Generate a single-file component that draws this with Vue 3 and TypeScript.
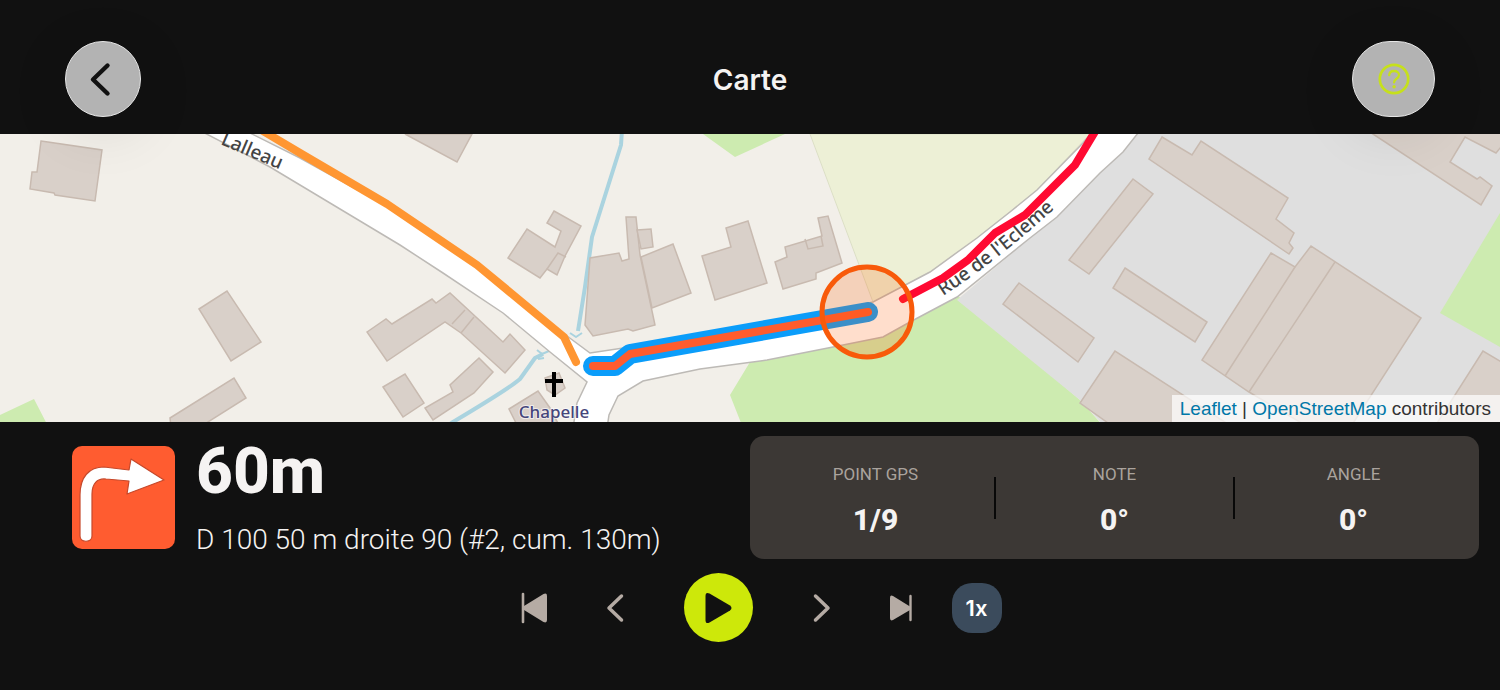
<script setup lang="ts">
import { ref } from 'vue'

interface Stat {
  label: string
  value: string
}

const stats: Stat[] = [
  { label: 'POINT GPS', value: '1/9' },
  { label: 'NOTE', value: '0°' },
  { label: 'ANGLE', value: '0°' },
]

const speeds = [1, 2, 4]
const speedIndex = ref(0)

function nextSpeed(): void {
  speedIndex.value = (speedIndex.value + 1) % speeds.length
}

const buildings: string[] = [
  '41,141 102,150 95,201 55,195 54,193 30,189 32,172 37,172',
  '405,134 457,162 472,134',
  '554,211 581,226 565,256 557,275 547,269 540,278 508,258 527,229 555,247 561,231 547,223',
  '626,217 636,217 640,255 655,325 633,331 628,329 593,336 585,325 590,258 619,253 622,261 629,259',
  '637,230 651,229 653,247 641,249',
  '641,257 673,244 691,293 652,308',
  '702,256 731,247 726,228 748,221 767,283 715,300',
  '818,218 828,216 842,263 816,273 816,279 783,289 775,262 787,257 785,247 822,236',
  '199,309 227,291 261,342 231,361',
  '170,418 234,378 246,398 200,427 171,427',
  '367,332 386,319 392,324 432,299 436,303 450,293 503,342 510,334 525,350 505,373 461,333 445,322 387,361',
  '383,387 405,374 424,403 403,417',
  '479,358 493,372 474,393 433,420 425,408 453,392 450,385',
  '509,409 538,391 550,408 560,427 518,427',
  '545,378 559,373 565,388 555,395 547,390',
  '1162,137 1192,155 1201,141 1288,198 1276,219 1294,233 1289,243 1293,248 1289,254 1149,159',
  '1133,179 1153,194 1089,274 1069,260',
  '1125,268 1207,322 1195,342 1113,288',
  '1019,283 1094,338 1078,362 1003,304',
  '1115,351 1080,403 1115,428 1234,428',
  '1271,253 1295,267 1311,246 1421,318 1350,428 1310,428 1249,392 1202,360',
  '1373,134 1481,205 1492,186 1480,177 1477,179 1450,162 1465,137 1496,153 1505,142 1505,128 1363,128',
  '1483,351 1434,428 1505,428 1505,364',
]
</script>

<template>
  <main class="screen">
    <header class="topbar">
      <button class="round back" type="button" aria-label="Retour">
        <svg width="38" height="38" viewBox="0 0 38 38" fill="none" stroke="#111" stroke-width="4.4" stroke-linecap="round" stroke-linejoin="round">
          <path d="M23.500 5.500 L9 19.500 L23.500 33.500" />
        </svg>
      </button>
      <h1>Carte</h1>
      <button class="round help" type="button" aria-label="Aide">
        <svg width="32" height="32" viewBox="0 0 32 32" fill="none" stroke="#c6e01c" stroke-linecap="round" stroke-linejoin="round">
          <circle cx="16" cy="16" r="14.200" stroke-width="2.700" />
          <path d="M11.200 12.200 C11.400 9.400 13.200 8 16.100 8 C19 8 21 9.700 21 12 C21 14 19.800 15 18.200 16 C16.700 17 16.100 17.700 16.100 19.400" stroke-width="2.300" />
          <circle cx="16.100" cy="23.700" r="1.700" fill="#c6e01c" stroke="none" />
        </svg>
      </button>
    </header>

    <section class="map" aria-label="Carte du parcours">
      <svg class="tiles" viewBox="0 134 1500 288" preserveAspectRatio="xMidYMid slice">
        <defs>
          <path id="rue" d="M943 296 Q1005 256 1068 196" />
        </defs>
        <rect y="100" width="1500" height="360" fill="#f2efe9" />
        <path d="M810 134 L873 302 L930 272 L977 238 L1037 190 L1090 134 Z" fill="#edf0d6" stroke="#dcdfc6" />
        <path d="M703 134 L735 157 L785 134 Z M0 415 L34 399 L49 428 H0 Z" fill="#cdebb0" />
        <path d="M750 362 L730 395 L743 428 H1105 L1080 400 L957 295 L883 335 Z" fill="#cdebb0" />
        <path d="M1137 134 L1030 238 L957 300 L1080 400 L1106 428 H1500 V134 Z" fill="#dfdfdf" />
        <path d="M1500 213 L1440 313 L1500 347 Z" fill="#cdebb0" />

        <g fill="none" stroke="#aad3df" stroke-width="4" stroke-linejoin="round">
          <path d="M622 130 L621 145 L592 237 L585 287 L578 331" />
          <path d="M543 354 L535 358 L520 379 Q510 388 453 422 L444 428" />
          <path d="M570 333 L576 337 L582 333 M537 350 L542 354 L549 351 M538 359 L544 358" stroke-width="2" />
        </g>

        <path
          class="road"
          d="M195 128 L270 167 L400 245 L443 273 L503 313 L550 352 L587 382 L577 403 L573 428 H607 L609 415 L618 396 L643 381 L700 369 L767 360 L833 347 L883 337 L910 322 L957 297 L1030 238 L1057 217 L1100 173 L1123 152 L1142 128 H1096 L1083 143 L1037 190 L1010 212 L977 238 L930 272 L873 302 L740 332 L630 347 L590 353 L563 333 L475 265 L385 205 L300 158 L240 128 Z"
        />

        <g class="buildings">
          <polygon v-for="shape in buildings" :key="shape" :points="shape" />
          <path d="M547 269 L558 253 L566 257 M805 239 L808 249 L823 246 L821 236 M452 324 L465 310 M461 333 L474 317 M1295 267 L1225 376 M1335 262 L1249 392" fill="none" />
        </g>

        <g class="streets">
          <text transform="translate(220 144) rotate(23)">Lalleau</text>
          <text><textPath href="#rue">Rue de l'Ecleme</textPath></text>
        </g>

        <path d="M554 372 V397 M545 381 H563" stroke="#000" stroke-width="4" />
        <text class="place" x="554" y="418" text-anchor="middle">Chapelle</text>

        <g fill="none" stroke-linecap="round" stroke-linejoin="round">
          <path d="M258 128 L300 153 L387 204 L477 265 L564 337 L576 362" stroke="#ff9632" stroke-width="8" />
          <path d="M903 299 L943 278 L968 260 L995 233 L1025 215 L1075 165 L1096 130" stroke="#ff0a32" stroke-width="8" />
          <path d="M593 366 H615 L630 354 L868 312" stroke="#0b9dfa" stroke-width="20" />
          <path d="M593 366 H615 L630 354 L868 312" stroke="#ff5c2e" stroke-width="8" />
        </g>
        <circle cx="867" cy="312" r="45" fill="#ff5a00" fill-opacity="0.200" stroke="#f85a0a" stroke-width="5" />
      </svg>
      <div class="attribution">
        <a href="#leaflet">Leaflet</a> | <a href="#osm">OpenStreetMap</a> contributors
      </div>
    </section>

    <section class="panel">
      <div class="info">
        <div class="instruction">
          <svg class="turn" width="103" height="103" viewBox="0 0 103 103">
            <rect width="103" height="103" rx="10" fill="#ff5c30" />
            <path
              d="M8 49 C8 31 17 21 32 21 L57 24 L59 13 L92 34 L55 48 L57 35 L34 33 C25 32 20 38 20 48 V90 C20 97 8 97 8 90 Z"
              fill="#fff" stroke="#c6482a" stroke-width="1.200" stroke-linejoin="round"
            />
          </svg>
          <div class="words">
            <strong class="distance">60m</strong>
            <p class="detail">D 100 50 m droite 90 (#2, cum. 130m)</p>
          </div>
        </div>

        <dl class="stats">
          <div v-for="stat in stats" :key="stat.label" class="stat">
            <dt>{{ stat.label }}</dt>
            <dd>{{ stat.value }}</dd>
          </div>
        </dl>
      </div>

      <nav class="controls" aria-label="Lecture">
        <button class="skip" type="button" aria-label="Premier point">
          <svg width="28" height="32" viewBox="0 0 28 32" fill="#b5aba4">
            <path d="M2 2 V30" stroke="#b5aba4" stroke-width="2.600" stroke-linecap="round" />
            <path d="M3 14 L22.500 2 Q26 .5 26 4 V28 Q26 31.500 22.500 30 L3 18 Z" />
          </svg>
        </button>
        <button class="step" type="button" aria-label="Point précédent">
          <svg width="20" height="32" viewBox="0 0 20 32" fill="none" stroke="#b5aba4" stroke-width="3.500" stroke-linecap="round" stroke-linejoin="round">
            <path d="M16.500 4 L4 16 L16.500 28" />
          </svg>
        </button>
        <button class="play" type="button" aria-label="Lecture">
          <svg width="28" height="32" viewBox="0 0 28 32" fill="#111">
            <path d="M1.500 4 Q1.500 -.5 5.500 1.500 L26 13.500 Q29 16 26 18.500 L5.500 30.500 Q1.500 32.500 1.500 28 Z" />
          </svg>
        </button>
        <button class="step" type="button" aria-label="Point suivant">
          <svg width="20" height="32" viewBox="0 0 20 32" fill="none" stroke="#b5aba4" stroke-width="3.500" stroke-linecap="round" stroke-linejoin="round">
            <path d="M3.500 4 L16 16 L3.500 28" />
          </svg>
        </button>
        <button class="skip" type="button" aria-label="Dernier point">
          <svg width="24" height="28" viewBox="0 0 24 28" fill="#b5aba4">
            <path d="M20.500 2 V26" stroke="#b5aba4" stroke-width="2.400" stroke-linecap="round" />
            <path d="M20 12.500 L3 2 Q0 .5 0 4 V24 Q0 27.500 3 26 L20 16 Z" />
          </svg>
        </button>
        <button class="speed" type="button" @click="nextSpeed">{{ speeds[speedIndex] }}x</button>
      </nav>
    </section>
  </main>
</template>

<style>
body {
  margin: 0;
  background: #111;
}
</style>

<style scoped>
.screen {
  display: flex;
  flex-direction: column;
  min-height: 100vh;
  background: #111;
  color: #f5f3f2;
  font-family: Roboto, "Noto Sans", sans-serif;
}

button {
  display: flex;
  align-items: center;
  justify-content: center;
  padding: 0;
  border: 0;
  background: none;
  font: inherit;
  cursor: pointer;
}

.topbar {
  position: relative;
  z-index: 1;
  display: grid;
  grid-template-columns: 1fr auto 1fr;
  align-items: center;
  padding: 41px 65px 17px;
}

h1 {
  margin: 0;
  padding-top: 2px;
  font: 600 28px/36px Inter, sans-serif;
}

.round {
  box-sizing: border-box;
  width: 76px;
  height: 76px;
  border: 1px solid #e6e6e6;
  border-radius: 38px;
  background: #b3b3b3;
  box-shadow: 0 12px 60px rgba(0, 0, 0, 0.12);
}

.help {
  justify-self: end;
  width: 83px;
}

.map {
  position: relative;
  flex: 1;
  min-height: 200px;
  overflow: hidden;
}

.tiles {
  position: absolute;
  inset: 0;
  width: 100%;
  height: 100%;
}

.road {
  fill: #fff;
  stroke: #bdbab6;
  stroke-width: 1.5;
}

.buildings {
  fill: #d9d0c9;
  stroke: #c8bab0;
  stroke-width: 1.5;
}

.streets {
  fill: #444;
  font: 500 19px "Noto Sans", sans-serif;
}

.place {
  fill: #45457a;
  stroke: #fff;
  stroke-opacity: 0.6;
  stroke-width: 2;
  paint-order: stroke;
  font: 500 17px "Noto Sans", sans-serif;
}

.attribution {
  position: absolute;
  right: 0;
  bottom: 0;
  padding: 0 9px 0 8px;
  background: rgba(255, 255, 255, 0.7);
  color: #333;
  font: 19px/27px "Liberation Sans", Arial, sans-serif;
}

.attribution a {
  color: #0078a8;
  text-decoration: none;
}

.panel {
  padding: 14px 0 48px;
}

.info {
  display: grid;
  grid-template-columns: 1fr 1fr;
  padding-bottom: 14px;
}

.instruction {
  display: flex;
  gap: 21px;
  padding: 10px 0 0 72px;
}

.turn {
  flex: none;
}

.distance {
  display: block;
  font-size: 64px;
  font-weight: 800;
  line-height: 52px;
}

.detail {
  margin: 25px 0 0;
  font-size: 28px;
  font-weight: 300;
  line-height: 34px;
  white-space: nowrap;
}

.stats {
  display: grid;
  grid-template-columns: repeat(3, 1fr);
  align-items: center;
  box-sizing: border-box;
  height: 123px;
  margin: 0 21px 0 0;
  padding: 0 6px;
  border-radius: 14px;
  background: #3c3835;
  text-align: center;
}

.stat {
  position: relative;
  padding-top: 4px;
}

.stat + .stat::before {
  content: "";
  position: absolute;
  top: 50%;
  left: -1px;
  width: 2px;
  height: 42px;
  background: #080808;
  transform: translateY(-50%);
}

dt {
  color: #aaa39d;
  font-size: 17px;
  line-height: 24px;
}

dd {
  margin: 16px 0 0;
  font-size: 30px;
  font-weight: 800;
  line-height: 36px;
}

.controls {
  display: flex;
  align-items: center;
  justify-content: center;
  gap: 24px;
  padding-left: 10px;
}

.skip {
  width: 52px;
  height: 52px;
}

.step {
  width: 60px;
  height: 52px;
}

.play {
  width: 69px;
  height: 69px;
  margin: 0 15px;
  border-radius: 50%;
  background: #cde80a;
}

.speed {
  width: 50px;
  height: 50px;
  border-radius: 20px;
  background: #3b4b5c;
  color: #fff;
  font: 600 22px/26px Inter, sans-serif;
}
</style>
